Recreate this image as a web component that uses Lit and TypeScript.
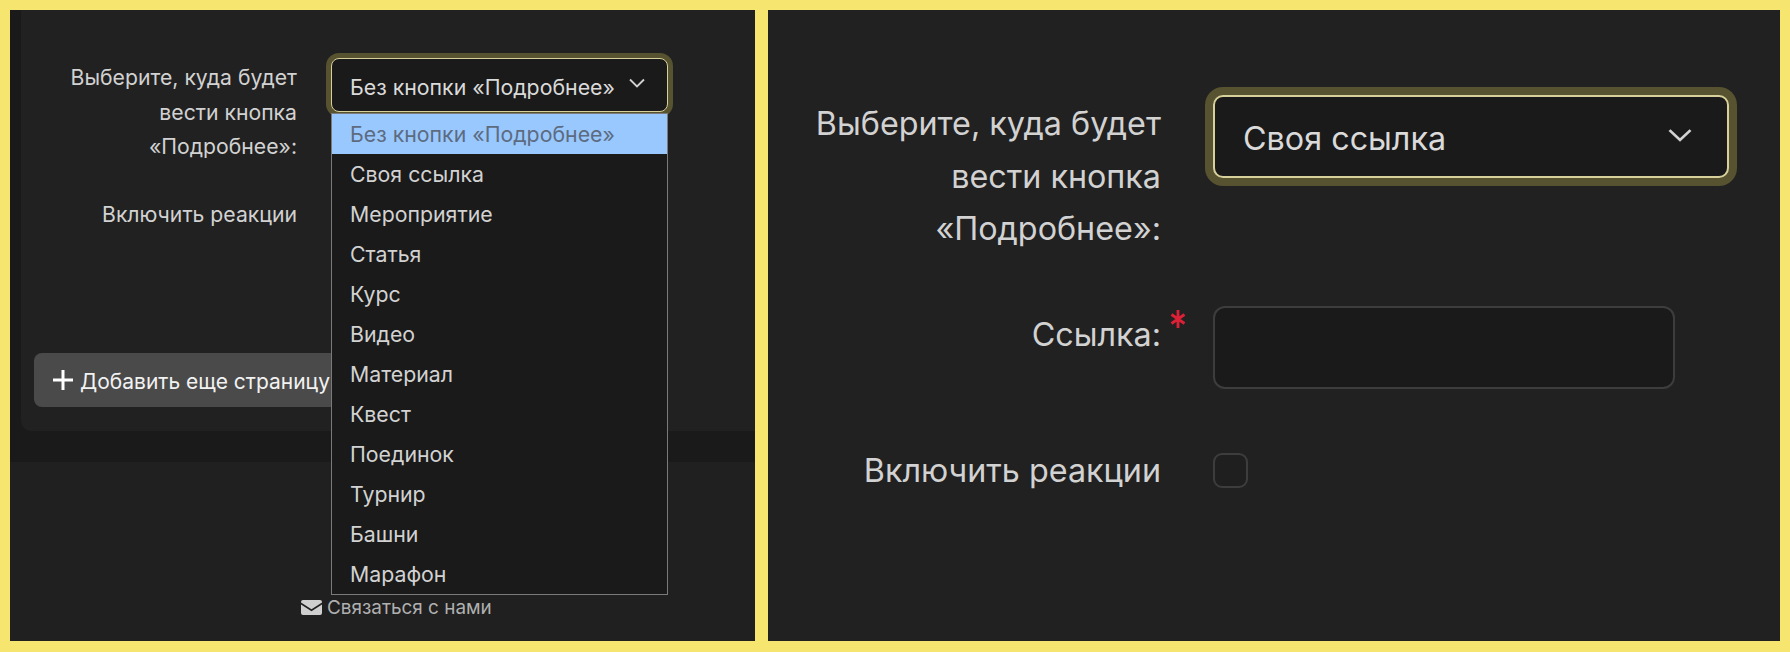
import { LitElement, html, css, svg } from "lit";
import { customElement } from "lit/decorators.js";

const OPTIONS = ["Без кнопки «Подробнее»","Своя ссылка","Мероприятие","Статья","Курс","Видео","Материал","Квест","Поединок","Турнир","Башни","Марафон"];

const chevron = svg`<path d="M1 1.5 L8 8.5 L15 1.5" fill="none" stroke="currentColor" stroke-width="1.8"/>`;

@customElement("app-root")
export class AppRoot extends LitElement {
  static styles = css`
    :host { display: block; width: 1790px; height: 652px; }
    * { box-sizing: border-box; }
    .page { width: 1790px; height: 652px; background: #f6e56f; padding: 10px 10px 11px; display: grid; grid-template-columns: 745px 1012px; column-gap: 13px; font-family: Inter, "Liberation Sans", sans-serif; color: #d2d2d2; }
    .left { background: #1a1a1a; display: flex; flex-direction: column; min-width: 0; }
    .card { height: 421px; margin-left: 11px; background: #212121; border-radius: 0 0 0 10px; padding: 48px 0 24px 13px; display: flex; flex-direction: column; }
    .band { height: 31px; flex: none; }
    .footer { flex: 1; background: #202020; display: flex; justify-content: flex-start; padding: 136px 0 0 291px; }
    .contact { display: flex; align-items: center; gap: 5px; height: 18px; font-size: 18.9px; color: #b0b0b0; }
    .mail { width: 21px; height: 15px; display: block; }
    .row-s { display: flex; align-items: flex-start; gap: 34px; }
    .row-s + .row-s { margin-top: 31px; }
    .lab-s { width: 263px; text-align: right; font-size: 21.2px; line-height: 34.5px; padding-top: 2px; flex: none; }
    .sel-wrap { position: relative; width: 337px; flex: none; }
    .select { display: flex; align-items: center; justify-content: space-between; background: #1a1a1a; border: 1.5px solid #d8d09a; border-radius: 8px; }
    .select.s { height: 54px; padding: 4px 22px 0 18px; font-size: 21.3px; box-shadow: 0 0 0 5px #57522f; color: #dadada; }
    .chev-s { width: 16px; height: 10px; display: block; margin-top: -8px; color: #d2d2d2; }
    .dropdown { position: absolute; left: 0; top: 55px; width: 337px; height: 482px; background: #1a1a1a; border: 1px solid #7a7a7a; z-index: 2; font-size: 21.3px; }
    .opt { height: 40px; line-height: 41px; padding-left: 18px; color: #d2d2d2; }
    .opt.on { background: #99c8ff; color: #5d6b80; }
    .check-s { width: 24px; height: 24px; }
    .add { margin-top: auto; align-self: flex-start; height: 54px; width: 420px; background: #4a4a4a; border-radius: 8px; color: #f2f2f2; font-size: 21px; display: flex; align-items: center; gap: 7px; padding: 2px 0 0 19px; }
    .plus { width: 20px; height: 20px; display: block; margin-top: -2px; }

    .right { background: #212121; padding: 85px 0 0 0; min-width: 0; }
    .row-l { display: flex; align-items: flex-start; gap: 52px; }
    .lab-l { width: 393px; flex: none; text-align: right; font-size: 32.3px; line-height: 52.5px; position: relative; padding-top: 3px; }
    .req { position: absolute; left: 402px; top: 4px; width: 16px; height: 18px; display: block; }
    .select.l { width: 516px; height: 83px; padding: 4px 35px 0 28px; font-size: 32.3px; box-shadow: 0 0 0 8px #57522f; border-width: 2px; border-radius: 10px; color: #dadada; }
    .chev-l { width: 24px; height: 14px; display: block; margin-top: -7px; color: #d2d2d2; }
    .input { width: 462px; height: 83px; background: #1a1a1a; border: 2px solid #3d3d3d; border-radius: 12px; }
    .link-row { margin-top: 50px; }
    .react-row { margin-top: 56px; align-items: center; }
    .react-row .lab-l { padding-top: 0; }
    .box { width: 35px; height: 35px; background: #1f1f1f; border: 2px solid #3d3d3d; border-radius: 9px; }
  `;

  render() {
    return html`<div class="page">
      <section class="left">
        <div class="card">
          <div class="row-s">
            <div class="lab-s">Выберите, куда будет<br />вести кнопка<br />«Подробнее»:</div>
            <div class="sel-wrap">
              <div class="select s"><span>Без кнопки «Подробнее»</span><svg class="chev-s" viewBox="0 0 16 10">${chevron}</svg></div>
              <div class="dropdown">
                ${OPTIONS.map((o, i) => html`<div class="opt ${i === 0 ? "on" : ""}">${o}</div>`)}
              </div>
            </div>
          </div>
          <div class="row-s">
            <div class="lab-s">Включить реакции</div>
            <div class="check-s"></div>
          </div>
          <div class="add">
            <svg class="plus" viewBox="0 0 20 20"><path d="M10 0V20M0 10H20" stroke="#fff" stroke-width="3"/></svg>
            <span>Добавить еще страницу</span>
          </div>
        </div>
        <div class="band"></div>
        <div class="footer">
          <div class="contact">
            <svg class="mail" viewBox="0 0 21 15"><path fill="#cfcfcf" d="M2 0H19A2 2 0 0 1 21 2V2.6L10.5 9.2 0 2.6V2A2 2 0 0 1 2 0ZM0 4.6L10.5 11.2 21 4.6V13A2 2 0 0 1 19 15H2A2 2 0 0 1 0 13Z"/></svg>
            <span>Связаться с нами</span>
          </div>
        </div>
      </section>
      <section class="right">
        <div class="row-l">
          <div class="lab-l">Выберите, куда будет<br />вести кнопка<br />«Подробнее»:</div>
          <div class="select l"><span>Своя ссылка</span><svg class="chev-l" viewBox="0 0 16 10" preserveAspectRatio="none">${chevron}</svg></div>
        </div>
        <div class="row-l link-row">
          <div class="lab-l">Ссылка:<svg class="req" viewBox="0 0 16 18"><path d="M8 0V18M1.5 4.5L14.5 13.5M14.5 4.5L1.5 13.5" stroke="#dc2035" stroke-width="2.8"/></svg></div>
          <div class="input"></div>
        </div>
        <div class="row-l react-row">
          <div class="lab-l">Включить реакции</div>
          <div class="box"></div>
        </div>
      </section>
    </div>`;
  }
}
